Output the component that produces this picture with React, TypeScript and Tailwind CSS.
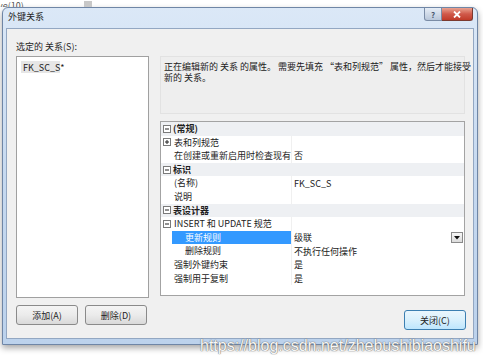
import React from "react";

const FONT = "font-['Noto_Sans_CJK_SC','Noto_Sans',sans-serif]";

interface Row {
  name: string;
  value?: string;
  kind: "cat" | "prop" | "sub";
  icon?: "minus" | "plus";
  selected?: boolean;
}

const rows: Row[] = [
  { name: "(常规)", kind: "cat", icon: "minus" },
  { name: "表和列规范", kind: "prop", icon: "plus" },
  { name: "在创建或重新启用时检查现有数据", value: "否", kind: "prop" },
  { name: "标识", kind: "cat", icon: "minus" },
  { name: "(名称)", value: "FK_SC_S", kind: "prop" },
  { name: "说明", value: "", kind: "prop" },
  { name: "表设计器", kind: "cat", icon: "minus" },
  { name: "INSERT 和 UPDATE 规范", kind: "prop", icon: "minus" },
  { name: "更新规则", value: "级联", kind: "sub", selected: true },
  { name: "删除规则", value: "不执行任何操作", kind: "sub" },
  { name: "强制外键约束", value: "是", kind: "prop" },
  { name: "强制用于复制", value: "是", kind: "prop" },
];

// petit carré ⊟ / ⊞ du property grid
function Expander({ type }: { type: "minus" | "plus" }) {
  return (
    <svg width="8" height="8" viewBox="0 0 8 8" className="shrink-0">
      <rect x="0.5" y="0.5" width="7" height="7" fill="#fff" stroke="#7a7a7a" />
      <line x1="2" y1="4" x2="6" y2="4" stroke="#222" />
      {type === "plus" && <line x1="4" y1="2" x2="4" y2="6" stroke="#222" />}
    </svg>
  );
}

function PropertyRow({ row }: { row: Row }) {
  if (row.kind === "cat") {
    return (
      <div className="flex h-[13.6px] items-center bg-[#eef0f3]">
        <div className="flex w-[12px] shrink-0 justify-start pl-[2px]">
          <Expander type="minus" />
        </div>
        <span className="font-bold text-[#1e1e1e]">{row.name}</span>
      </div>
    );
  }
  return (
    <div className="flex h-[13.6px] items-center">
      <div className="flex w-[11px] shrink-0 justify-start pl-[2px]">
        {row.icon && <Expander type={row.icon} />}
      </div>
      <div
        className={
          "h-full w-[120px] shrink-0 overflow-hidden border-r border-[#f0f0f0] " +
          (row.selected ? "bg-[#3399ff] text-white " : "text-[#222] ") +
          (row.kind === "sub" ? "pl-[13px]" : "pl-[2px]")
        }
      >
        <div className="w-[200px] whitespace-nowrap leading-[13.6px]">{row.name}</div>
      </div>
      {row.value !== undefined && (
        <div className="flex h-full flex-1 items-center justify-between pl-[2px] pr-[1px] text-[#222]">
          <span>{row.value}</span>
          {row.selected && (
            <span className="flex h-[11px] w-[12px] items-center justify-center border border-[#8a8a8a] bg-gradient-to-b from-[#f7f7f7] to-[#dcdcdc]">
              <svg width="6" height="4" viewBox="0 0 6 4">
                <path d="M0 0h6L3 3.5z" fill="#111" />
              </svg>
            </span>
          )}
        </div>
      )}
    </div>
  );
}

function DlgButton({ label, primary, className }: { label: string; primary?: boolean; className?: string }) {
  return (
    <button
      className={
        "flex h-[20px] w-[62px] items-center justify-center rounded-[3px] border text-[9px] text-[#222] " +
        (primary
          ? "border-[#3c7fb1] bg-gradient-to-b from-[#eaf6fd] via-[#d9f0fc] to-[#bee6fd] "
          : "border-[#8a8a8a] bg-gradient-to-b from-[#f4f4f4] via-[#ebebeb] to-[#d9d9d9] ") +
        (className ?? "")
      }
    >
      {label}
    </button>
  );
}

export default function App() {
  return (
    <div className={"relative h-[358px] w-[483px] overflow-hidden bg-white text-[9px] leading-[11px] " + FONT}>
      {/* bout de la fenêtre derrière */}
      <div className="flex h-[7px] items-end overflow-hidden text-[#555]">
        <span className="-mb-[4px] ml-[-2px] leading-[11px]">ye(10)</span>
        <span className="ml-[60px] h-[6px] w-[8px] bg-[#c8c8c8]" />
      </div>

      {/* fenêtre */}
      <div className="ml-[2px] flex h-[338px] w-[476px] flex-col rounded-t-[6px] border border-[#6f86a6] bg-gradient-to-b from-[#dbe8f7] via-[#c6d9f0] to-[#bcd2ec] shadow-[0_3px_6px_rgba(0,0,0,0.35)]">
        <div className="flex h-[20px] shrink-0 items-start justify-between pl-[5px]">
          <span className="mt-[3px] text-[#1e1e1e]">外键关系</span>
          <div className="mr-[4px] flex">
            <div className="flex h-[13px] w-[18px] items-center justify-center rounded-bl-[3px] border border-t-0 border-[#7a8ca6] bg-gradient-to-b from-[#e6edf6] to-[#b9c7da] text-[8px] font-bold text-[#4a5a70]">
              ?
            </div>
            <div className="flex h-[13px] w-[31px] items-center justify-center rounded-br-[3px] border border-t-0 border-l-0 border-[#7a3a30] bg-gradient-to-b from-[#e8a190] via-[#d0594a] to-[#c03a28]">
              <svg width="8" height="7" viewBox="0 0 8 7">
                <path d="M1 0.5l6 6M7 0.5l-6 6" stroke="#fff" strokeWidth="1.8" />
              </svg>
            </div>
          </div>
        </div>

        {/* zone client */}
        <div className="mx-[3px] flex h-[311px] flex-col border border-[#93a7c2] bg-[#f0f0f0] pl-[9px] pt-[12px]">
          <div className="h-[15px] text-[#1e1e1e]">选定的 关系(S):</div>
          <div className="flex gap-[11px]">
            <div className="h-[242px] w-[133px] border border-[#a0a0a0] bg-white p-[4px]">
              <div className="flex h-[12px] w-[39px] items-center bg-[#e6e6e6] pl-[2px] text-[#222]">FK_SC_S*</div>
            </div>
            <div className="flex w-[305px] flex-col gap-[7px]">
              <div className="h-[58px] border border-[#e2e2e2] bg-[#eeeeee] pl-[3px] pt-[4px] text-[#222] leading-[11px]">
                <div className="whitespace-nowrap">正在编辑新的 关系 的属性。 需要先填充 “表和列规范” 属性，然后才能接受</div>
                <div>新的 关系。</div>
              </div>
              <div className="h-[175px] border border-[#a3a3a3] bg-white">
                {rows.map((r, i) => (
                  <PropertyRow key={i} row={r} />
                ))}
              </div>
            </div>
          </div>
          <div className="mt-[7px] flex items-start">
            <DlgButton label="添加(A)" />
            <DlgButton label="删除(D)" className="ml-[7px]" />
            <DlgButton label="关闭(C)" primary className="ml-[257px] mt-[5px]" />
          </div>
        </div>
      </div>

      {/* filigrane */}
      <div className="absolute left-[200px] top-[337px] font-['Liberation_Sans',sans-serif] text-[16px] leading-[18px] text-[#f6f6f6] [text-shadow:0_0_1px_#6a6a6a,0_0_1px_#6a6a6a]">
        https://blog.csdn.net/zhebushibiaoshifu
      </div>
    </div>
  );
}
